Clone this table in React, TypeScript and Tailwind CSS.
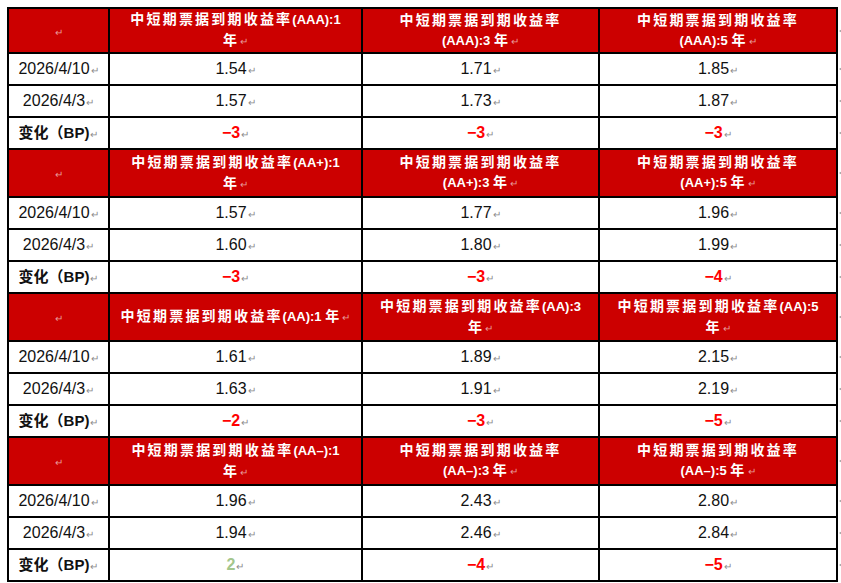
const RED = "text-[#ff0000]"

type Section = {
  headers: string[][]
  rows: { date: string; vals: string[] }[]
  diff: number[]
  first?: boolean
}

const SECTIONS: Section[] = [
  {
    headers: [
      ["中短期票据到期收益率(AAA):1", "年"],
      ["中短期票据到期收益率", "(AAA):3 年"],
      ["中短期票据到期收益率", "(AAA):5 年"],
    ],
    rows: [
      { date: "2026/4/10", vals: ["1.54", "1.71", "1.85"] },
      { date: "2026/4/3", vals: ["1.57", "1.73", "1.87"] },
    ],
    diff: [-3, -3, -3],
    first: true,
  },
  {
    headers: [
      ["中短期票据到期收益率(AA+):1", "年"],
      ["中短期票据到期收益率", "(AA+):3 年"],
      ["中短期票据到期收益率", "(AA+):5 年"],
    ],
    rows: [
      { date: "2026/4/10", vals: ["1.57", "1.77", "1.96"] },
      { date: "2026/4/3", vals: ["1.60", "1.80", "1.99"] },
    ],
    diff: [-3, -3, -4],
  },
  {
    headers: [
      ["中短期票据到期收益率(AA):1 年"],
      ["中短期票据到期收益率(AA):3", "年"],
      ["中短期票据到期收益率(AA):5", "年"],
    ],
    rows: [
      { date: "2026/4/10", vals: ["1.61", "1.89", "2.15"] },
      { date: "2026/4/3", vals: ["1.63", "1.91", "2.19"] },
    ],
    diff: [-2, -3, -5],
  },
  {
    headers: [
      ["中短期票据到期收益率(AA–):1", "年"],
      ["中短期票据到期收益率", "(AA–):3 年"],
      ["中短期票据到期收益率", "(AA–):5 年"],
    ],
    rows: [
      { date: "2026/4/10", vals: ["1.96", "2.43", "2.80"] },
      { date: "2026/4/3", vals: ["1.94", "2.46", "2.84"] },
    ],
    diff: [2, -4, -5],
  },
]

function Mark({ light }: { light?: boolean }) {
  return (
    <span
      className={`ml-[1px] text-[10px] font-normal ${light ? "text-[#e89a9a]" : "text-[#8c8c8c]"}`}
    >
      ↵
    </span>
  )
}

// CJK runs get extra spacing, latin runs stay tight like the Word rendering
function HeaderLine({ text }: { text: string }) {
  const parts = text.split(/([\u4e00-\u9fff]+)/).filter(Boolean)
  return (
    <>
      {parts.map((p, i) =>
        /[\u4e00-\u9fff]/.test(p) ? (
          <span key={i} className="tracking-[2.2px] text-[14px]">
            {p}
          </span>
        ) : (
          <span key={i} className="text-[13px]">
            {p}
          </span>
        )
      )}
    </>
  )
}

const cell = "border-2 border-black text-center align-middle p-0"

// end-of-row mark, clipped by the page edge in the source, drawn as a tiny wedge
function RowEnd() {
  return (
    <td className="w-[5px] p-0 align-middle">
      <div className="ml-[1px] h-0 w-0 border-y-[2px] border-r-[3px] border-y-transparent border-r-[#a0a0a0]" />
    </td>
  )
}

export default function App() {
  return (
    <div
      className="w-[841px] h-[583px] overflow-hidden bg-white pt-[7px] pl-[7px]"
      style={{ fontFamily: '"Liberation Sans", "Noto Sans CJK SC", sans-serif' }}
    >
      <table className="table-fixed border-collapse w-[834px]">
        <colgroup>
          <col className="w-[101px]" />
          <col className="w-[253px]" />
          <col className="w-[237px]" />
          <col className="w-[238px]" />
          <col className="w-[5px]" />
        </colgroup>
        <tbody>
          {SECTIONS.map((s, si) => (
            <Block key={si} s={s} />
          ))}
        </tbody>
      </table>
    </div>
  )
}

function Block({ s }: { s: Section }) {
  return (
    <>
      <tr className={s.first ? "h-[45px]" : "h-[48px]"}>
        <td className={`${cell} bg-[#cc0000]`}>
          <Mark light />
        </td>
        {s.headers.map((lines, i) => (
          <td
            key={i}
            className={`${cell} bg-[#cc0000] text-white font-bold leading-[20px]`}
          >
            {lines.map((l, j) => (
              <div key={j} className="whitespace-nowrap">
                <HeaderLine text={l} />
                {j === lines.length - 1 && <Mark light />}
              </div>
            ))}
          </td>
        ))}
        <RowEnd />
      </tr>
      {s.rows.map((r) => (
        <tr key={r.date} className="h-[32px]">
          <td className={`${cell} text-[16px] text-[#111]`}>
            {r.date}
            <Mark />
          </td>
          {r.vals.map((v, i) => (
            <td key={i} className={`${cell} text-[16px] text-[#111]`}>
              {v}
              <Mark />
            </td>
          ))}
          <RowEnd />
        </tr>
      ))}
      <tr className="h-[32px]">
        <td className={`${cell} text-[15px] font-bold text-[#111]`}>
          变化（BP)
          <Mark />
        </td>
        {s.diff.map((d, i) => (
          <td
            key={i}
            className={`${cell} text-[16px] font-bold ${d > 0 ? "text-[#a3c68c]" : RED}`}
          >
            {d > 0 ? d : `−${Math.abs(d)}`}
            <Mark />
          </td>
        ))}
        <RowEnd />
      </tr>
    </>
  )
}
